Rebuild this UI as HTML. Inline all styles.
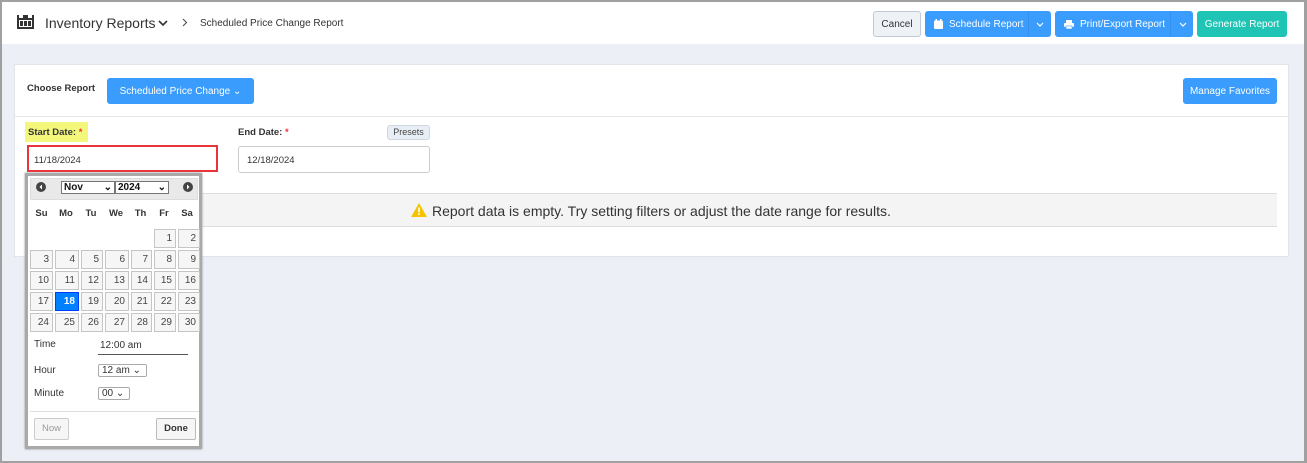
<!DOCTYPE html>
<html><head><meta charset="utf-8"><style>
*{box-sizing:border-box;margin:0;padding:0}
body{width:1307px;height:463px;overflow:hidden;background:#edeff6;font-family:"Liberation Sans",sans-serif;position:relative;color:#333}
.frame{position:absolute;inset:0;border:2px solid #a0a0a0;border-right-width:3px;pointer-events:none;z-index:9}
.hdr{position:absolute;left:0;top:0;width:1307px;height:44px;background:#fff}
.a{position:absolute;white-space:nowrap}
.btn{position:absolute;border-radius:3px;color:#fff;font-size:10px;display:flex;align-items:center;background:#3a9cfc;white-space:nowrap}
.card{position:absolute;left:14px;top:64px;width:1275px;height:193px;background:#fff;border:1px solid #e2e4ea}
.cal{position:absolute;left:25px;top:173px;width:177px;height:276px;background:#fff;border:3px solid #a9a9a9;box-shadow:0 0 2px #888}
.grid{position:absolute;left:30px;top:229px;display:grid;grid-template-columns:23px 24px 22px 24px 21px 22px 22px;grid-auto-rows:19px;gap:2px}
.grid div{background:#f6f6f6;border:1px solid #c5c5c5;font-size:10px;text-align:right;padding:3px 3px 0 0;color:#454545}
.grid .e{background:none;border:none}
.grid .s{background:#007fff;border-color:#003eff;color:#fff;font-weight:bold}
.sel{position:absolute;border:1px solid #767676;font-size:10px;font-weight:bold;background:#fff;height:13px;line-height:11px;padding-left:2px;color:#111}
</style></head><body>
<div class="hdr">
 <svg class="a" style="left:17px;top:15px" width="17" height="14" viewBox="0 0 17 14"><path d="M1 0v14M16 0v14M1 4h15M1 13h15" stroke="#333" stroke-width="2" fill="none"/><rect x="3" y="6" width="3" height="5" fill="#333"/><rect x="7" y="6" width="3" height="5" fill="#333"/><rect x="11" y="6" width="3" height="5" fill="#333"/><rect x="6" y="0" width="5" height="4" fill="#333"/></svg>
 <div class="a" style="left:45px;top:15px;font-size:14px;color:#333">Inventory Reports</div>
 <svg class="a" style="left:158px;top:20px" width="10" height="7"><path d="M1 1l4 4 4-4" stroke="#333" stroke-width="1.6" fill="none"/></svg>
 <svg class="a" style="left:182px;top:18px" width="6" height="9"><path d="M1 1l3.5 3.5L1 8" stroke="#555" stroke-width="1.2" fill="none"/></svg>
 <div class="a" style="left:200px;top:18px;font-size:10px;color:#333">Scheduled Price Change Report</div>
 <div class="btn" style="left:873px;top:11px;width:48px;height:26px;background:#eef2f7;border:1px solid #c3cad3;color:#333;justify-content:center">Cancel</div>
 <div class="btn" style="left:925px;top:11px;width:126px;height:26px"><svg style="margin-left:9px" width="9" height="10"><rect x="0" y="1.5" width="9" height="8.5" rx="1" fill="#fff"/><rect x="1.5" y="0" width="1.5" height="2" fill="#fff"/><rect x="6" y="0" width="1.5" height="2" fill="#fff"/></svg><span style="margin-left:6px">Schedule Report</span><span style="position:absolute;left:103px;top:0;width:1px;height:26px;background:#3490ee"></span><svg style="position:absolute;left:111px;top:11px" width="8" height="5"><path d="M1 1l3 3 3-3" stroke="#fff" stroke-width="1.2" fill="none"/></svg></div>
 <div class="btn" style="left:1055px;top:11px;width:138px;height:26px"><svg style="margin-left:9px" width="10" height="9"><rect x="2" y="0" width="6" height="3" fill="#fff"/><rect x="0" y="3" width="10" height="4" rx="1" fill="#fff"/><rect x="2" y="6" width="6" height="3" fill="#fff" stroke="#3a9cfc" stroke-width=".6"/></svg><span style="margin-left:6px">Print/Export Report</span><span style="position:absolute;left:115px;top:0;width:1px;height:26px;background:#3490ee"></span><svg style="position:absolute;left:124px;top:11px" width="8" height="5"><path d="M1 1l3 3 3-3" stroke="#fff" stroke-width="1.2" fill="none"/></svg></div>
 <div class="btn" style="left:1197px;top:11px;width:90px;height:26px;background:#1fc4b4;justify-content:center">Generate Report</div>
</div>
<div class="card">
 <div class="a" style="left:12px;top:18px;font-size:9.5px;font-weight:bold;color:#333">Choose Report</div>
 <div class="btn" style="left:92px;top:13px;width:147px;height:26px;justify-content:center">Scheduled Price Change ⌄</div>
 <div class="btn" style="left:1168px;top:13px;width:94px;height:26px;justify-content:center">Manage Favorites</div>
 <div class="a" style="left:0;top:51px;width:1273px;height:1px;background:#e6e6e6"></div>
</div>
<div class="a" style="left:25px;top:122px;width:63px;height:20px;background:#f3f77b"></div>
<div class="a" style="left:28px;top:127px;font-size:9.5px;font-weight:bold;color:#333">Start Date: <span style="color:#e33">*</span></div>
<div class="a" style="left:238px;top:127px;font-size:9.5px;font-weight:bold;color:#333">End Date: <span style="color:#e33">*</span></div>
<div class="a" style="left:387px;top:125px;width:43px;height:15px;background:#e8eef5;border:1px solid #cfd6de;border-radius:3px;font-size:9px;text-align:center;line-height:13px;color:#444">Presets</div>
<div class="a" style="left:27px;top:145px;width:191px;height:27px;border:2px solid #e8353b;font-size:9.5px;padding:8px 0 0 5px;color:#333;background:#fff">11/18/2024</div>
<div class="a" style="left:238px;top:146px;width:192px;height:27px;border:1px solid #ccc;border-radius:3px;font-size:9.5px;padding:8px 0 0 8px;color:#333;background:#fff">12/18/2024</div>
<div class="a" style="left:201px;top:193px;width:1076px;height:34px;background:#f4f4f4;border-top:1px solid #ddd;border-bottom:1px solid #ddd"></div>
<svg class="a" style="left:411px;top:203px" width="16" height="14"><path d="M8 0L16 14H0z" fill="#f5c400"/><rect x="7.2" y="4.5" width="1.6" height="5" fill="#fff"/><rect x="7.2" y="10.5" width="1.6" height="1.6" fill="#fff"/></svg>
<div class="a" style="left:432px;top:203px;font-size:14px;color:#333">Report data is empty. Try setting filters or adjust the date range for results.</div>
<div class="cal">
 <div class="a" style="left:2px;top:2px;width:168px;height:22px;background:#e9e9e9;border:1px solid #ddd"></div>
</div>
<svg class="a" style="left:36px;top:182px" width="10" height="10"><circle cx="5" cy="5" r="5" fill="#444"/><path d="M6 2.5L3.5 5 6 7.5z" fill="#fff"/></svg>
<svg class="a" style="left:183px;top:182px" width="10" height="10"><circle cx="5" cy="5" r="5" fill="#444"/><path d="M4 2.5L6.5 5 4 7.5z" fill="#fff"/></svg>
<div class="sel" style="left:61px;top:181px;width:54px">Nov<span style="position:absolute;right:2px">⌄</span></div>
<div class="sel" style="left:115px;top:181px;width:54px">2024<span style="position:absolute;right:2px">⌄</span></div>
<div class="a" style="left:30px;top:208px;width:172px;display:grid;grid-template-columns:23px 26px 24px 26px 23px 24px 22px;font-size:9.5px;font-weight:bold;color:#333;text-align:center"><span>Su</span><span>Mo</span><span>Tu</span><span>We</span><span>Th</span><span>Fr</span><span>Sa</span></div>
<div class="grid">
<div class="e"></div><div class="e"></div><div class="e"></div><div class="e"></div><div class="e"></div><div>1</div><div>2</div>
<div>3</div><div>4</div><div>5</div><div>6</div><div>7</div><div>8</div><div>9</div>
<div>10</div><div>11</div><div>12</div><div>13</div><div>14</div><div>15</div><div>16</div>
<div>17</div><div class="s">18</div><div>19</div><div>20</div><div>21</div><div>22</div><div>23</div>
<div>24</div><div>25</div><div>26</div><div>27</div><div>28</div><div>29</div><div>30</div>
</div>
<div class="a" style="left:34px;top:339px;font-size:10px;color:#333">Time</div>
<div class="a" style="left:100px;top:340px;font-size:10px;color:#333">12:00 am</div>
<div class="a" style="left:98px;top:354px;width:90px;height:1px;background:#555"></div>
<div class="a" style="left:34px;top:365px;font-size:10px;color:#333">Hour</div>
<div class="a" style="left:98px;top:364px;width:49px;height:13px;border:1px solid #aaa;border-radius:2px;font-size:10px;line-height:11px;padding-left:3px;color:#333">12 am ⌄</div>
<div class="a" style="left:34px;top:388px;font-size:10px;color:#333">Minute</div>
<div class="a" style="left:98px;top:387px;width:32px;height:13px;border:1px solid #aaa;border-radius:2px;font-size:10px;line-height:11px;padding-left:3px;color:#333">00 ⌄</div>
<div class="a" style="left:30px;top:411px;width:169px;height:1px;background:#ddd"></div>
<div class="a" style="left:34px;top:418px;width:35px;height:22px;border:1px solid #ccc;border-radius:2px;font-size:9.5px;color:#999;text-align:center;line-height:20px;background:#f6f6f6">Now</div>
<div class="a" style="left:156px;top:418px;width:40px;height:22px;border:1px solid #bbb;border-radius:2px;font-size:9.5px;font-weight:bold;color:#333;text-align:center;line-height:20px;background:#f6f6f6">Done</div>
<div class="frame"></div>
</body></html>
